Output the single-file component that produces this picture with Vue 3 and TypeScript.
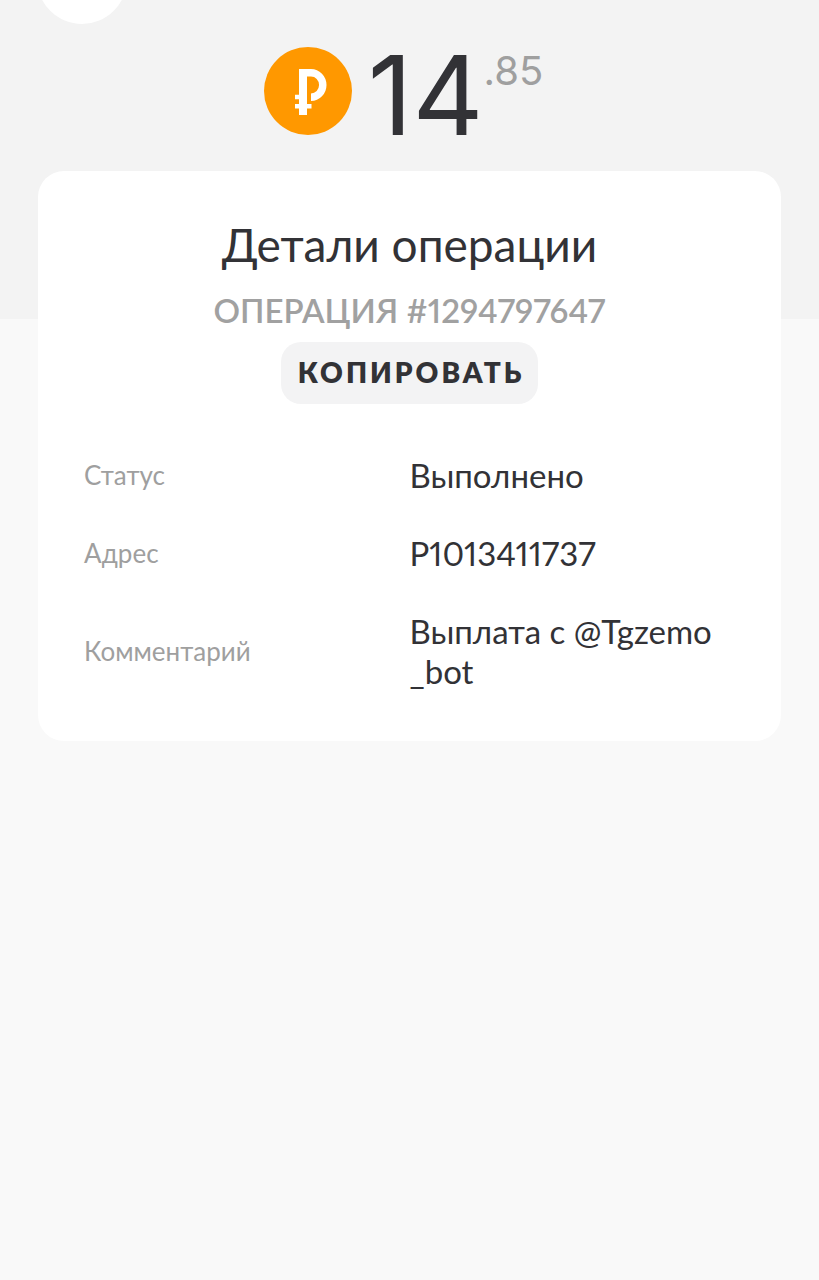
<script setup lang="ts">
import { ref } from 'vue'

interface Detail {
  label: string
  value: string
}

const operationId = '1294797647'
const copied = ref(false)

const details: Detail[] = [
  { label: 'Статус', value: 'Выполнено' },
  { label: 'Адрес', value: 'P1013411737' },
  { label: 'Комментарий', value: 'Выплата с @Tgzemo_bot' },
]

async function copyId(): Promise<void> {
  await navigator.clipboard?.writeText(operationId)
  copied.value = true
}
</script>

<template>
  <main class="page">
    <header class="hero">
      <button class="back" type="button" aria-label="Назад"></button>
      <div class="amount">
        <svg class="coin" viewBox="0 0 88 88" aria-hidden="true">
          <circle cx="44" cy="44" r="44" fill="#ff9800" />
          <path
            fill="#fff"
            d="M35 22H47A15.500 16 0 0 1 47 54V46.500A8 8.400 0 0 0 47 29.600H43V57H47.500V61.500H43V68H35V61.500H31V57H35V52.300H31V47.800H35Z"
          />
        </svg>
        <span class="whole">14</span><span class="cents">.85</span>
      </div>
    </header>

    <section class="card">
      <h1 class="title">Детали операции</h1>
      <p class="number">ОПЕРАЦИЯ #{{ operationId }}</p>
      <button class="copy" type="button" :aria-pressed="copied" @click="copyId">КОПИРОВАТЬ</button>
      <dl class="details">
        <div v-for="item in details" :key="item.label" class="row">
          <dt>{{ item.label }}</dt>
          <dd>{{ item.value }}</dd>
        </div>
      </dl>
    </section>
  </main>
</template>

<style>
body {
  margin: 0;
  background: #f9f9f9;
}
</style>

<style scoped>
.page {
  min-height: 100vh;
  font-family: Lato, "Open Sans", sans-serif;
  font-variant-numeric: proportional-nums;
  color: #323236;
  background: #f9f9f9;
}

.hero {
  display: flow-root;
  box-sizing: border-box;
  height: 319px;
  overflow: hidden;
  background: #f3f3f3;
}

.back {
  display: block;
  width: 90px;
  height: 90px;
  margin: -66px 0 0 37px;
  padding: 0;
  border: 0;
  border-radius: 50%;
  background: #fff;
}

.amount {
  display: flex;
  justify-content: center;
  align-items: flex-start;
  margin-top: 23px;
  padding-right: 12px;
  font-family: Inter, Lato, sans-serif;
}

.coin {
  width: 88px;
  height: 88px;
  margin-right: 16px;
}

.whole {
  font-size: 110px;
  line-height: 96px;
}

.cents {
  font-size: 40px;
  line-height: 48px;
  color: #9f9f9f;
}

.card {
  display: flex;
  flex-direction: column;
  align-items: center;
  box-sizing: border-box;
  margin: -148px 38px 0;
  padding: 46px 46px 50px;
  border-radius: 26px;
  background: #fff;
}

.title {
  margin: 0;
  font-size: 46px;
  font-weight: 400;
  line-height: 56px;
}

.number {
  margin: 17px 0 12px;
  font-size: 33px;
  font-weight: 600;
  line-height: 40px;
  color: #a1a1a1;
}

.copy {
  height: 62px;
  padding: 0 14px 2px 17px;
  border: 0;
  border-radius: 20px;
  font-family: inherit;
  font-size: 28px;
  font-weight: 800;
  letter-spacing: 3px;
  color: #323236;
  background: #f3f3f4;
}

.details {
  display: grid;
  gap: 38px;
  width: 100%;
  margin: 51px 0 0;
}

.row {
  display: grid;
  grid-template-columns: 1fr 1fr;
  align-items: center;
}

dt {
  font-size: 26px;
  line-height: 40px;
  color: #9f9f9f;
}

dd {
  margin: 0;
  padding-right: 14px;
  font-size: 33px;
  line-height: 40px;
  word-break: break-all;
}
</style>
